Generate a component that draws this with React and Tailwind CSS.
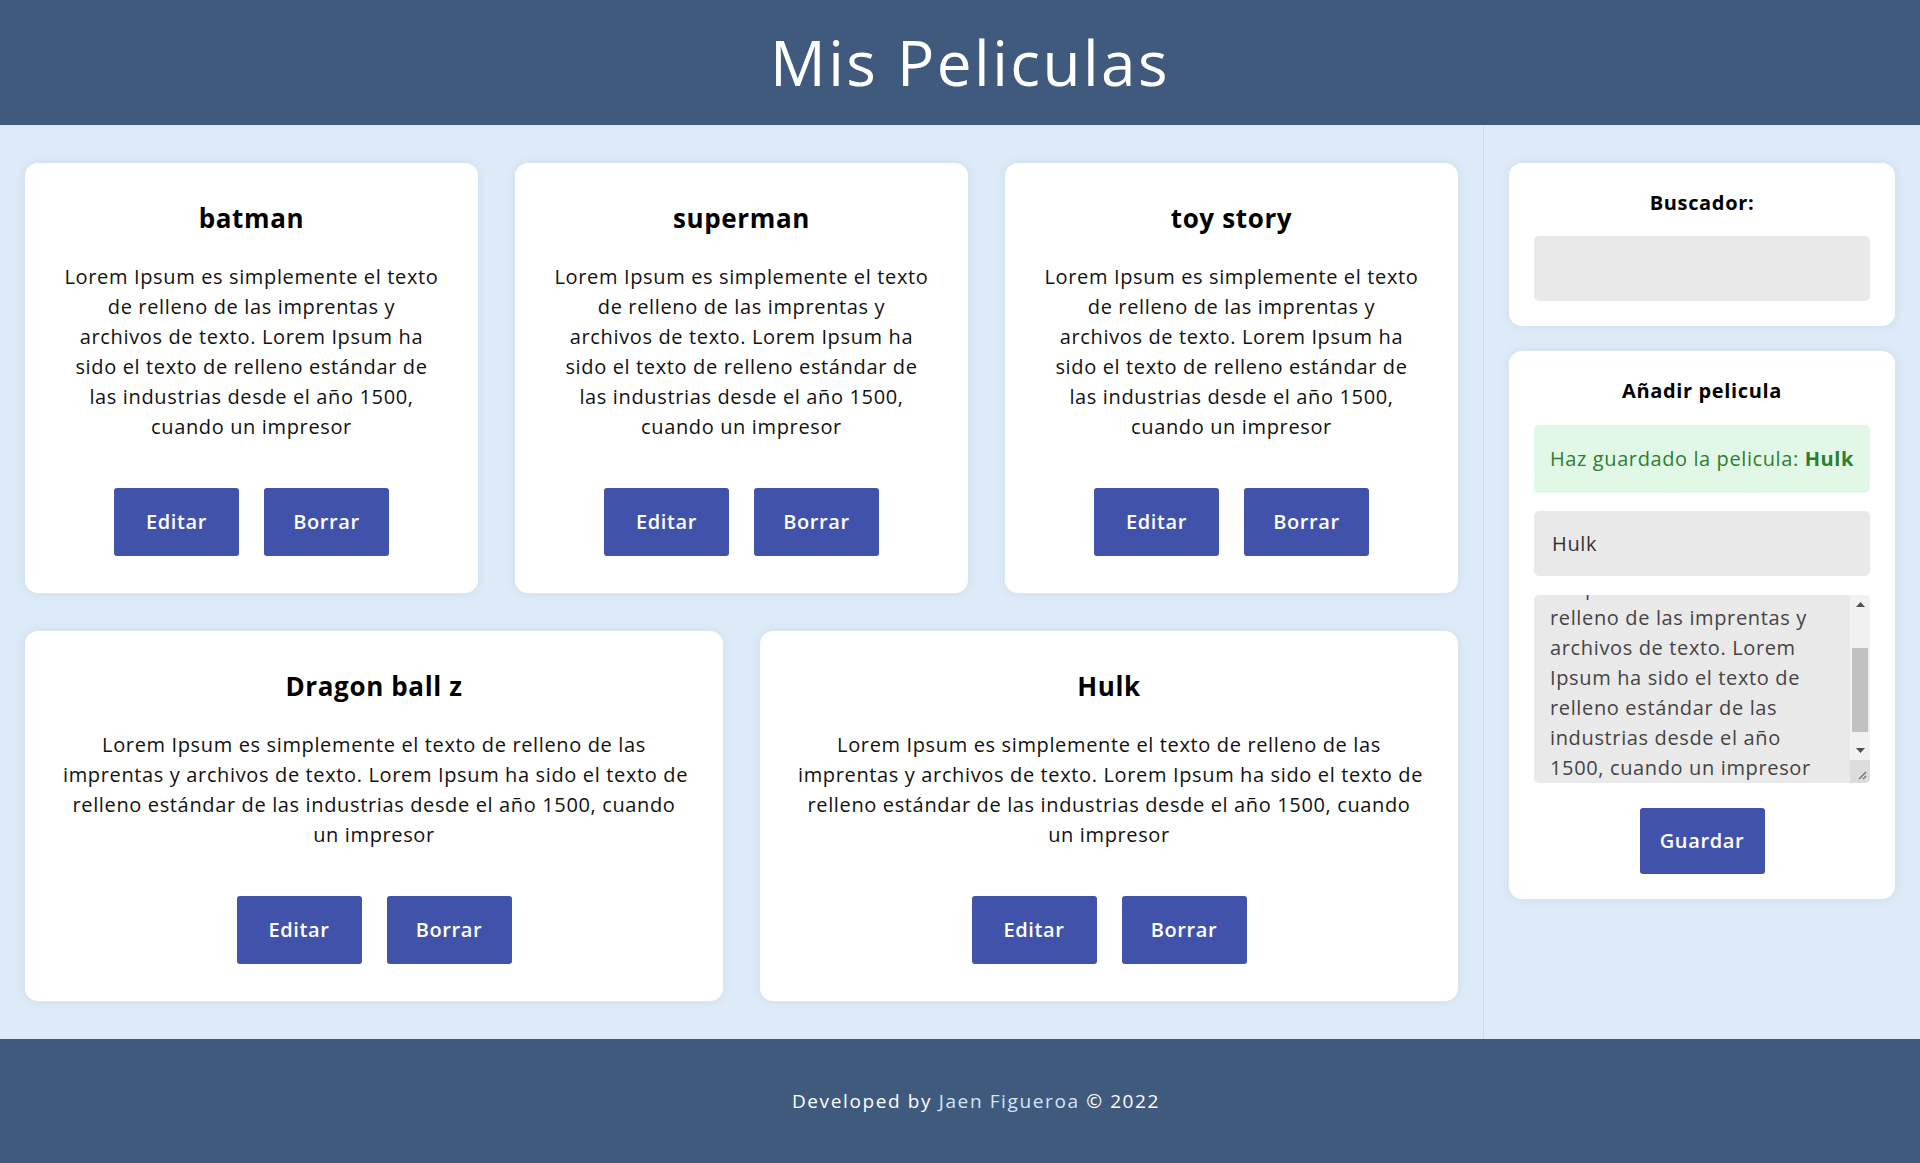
import { useEffect, useRef } from "react"

// wrapped the way the original page wraps them
const NARROW = [
  "Lorem Ipsum es simplemente el texto",
  "de relleno de las imprentas y",
  "archivos de texto. Lorem Ipsum ha",
  "sido el texto de relleno estándar de",
  "las industrias desde el año 1500,",
  "cuando un impresor",
]
const WIDE = [
  "Lorem Ipsum es simplemente el texto de relleno de las",
  "imprentas y archivos de texto. Lorem Ipsum ha sido el texto de",
  "relleno estándar de las industrias desde el año 1500, cuando",
  "un impresor",
]
const AREA = "Lorem Ipsum es\nsimplemente el texto de\nrelleno de las imprentas y\narchivos de texto. Lorem\nIpsum ha sido el texto de\nrelleno estándar de las\nindustrias desde el año\n1500, cuando un impresor"

const peliculas = [
  { id: 1, title: "batman", wide: false },
  { id: 2, title: "superman", wide: false },
  { id: 3, title: "toy story", wide: false },
  { id: 4, title: "Dragon ball z", wide: true },
  { id: 5, title: "Hulk", wide: true },
]

function Pelicula({ title, wide }) {
  const lines = wide ? WIDE : NARROW
  return (
    <article className="basis-[440px] grow min-w-0 bg-white rounded-[13px] shadow-[0_0_12px_rgba(40,70,110,0.07)] pt-[36px] pb-[37px] px-[38px] text-center">
      <h3 className="text-[26px] leading-[39px] font-bold text-black">{title}</h3>
      <p className="mt-[24px] text-[20px] leading-[30px] text-[#111]">
        {lines.map((l, i) => <span key={i} className="block whitespace-nowrap">{l}</span>)}
      </p>
      <div className="mt-[46px] flex justify-center gap-[25px]">
        <button className="w-[125px] h-[68px] rounded-[3px] bg-[#4152aa] text-white text-[20px] font-semibold">Editar</button>
        <button className="w-[125px] h-[68px] rounded-[3px] bg-[#4152aa] text-white text-[20px] font-semibold">Borrar</button>
      </div>
    </article>
  )
}

function FakeScrollbar() {
  return (
    <div className="w-[20px] shrink-0 flex flex-col bg-[#f1f1f1]">
      <div className="h-[19px] flex items-center justify-center">
        <svg width="9" height="5" viewBox="0 0 9 5"><path d="M0 5 L4.5 0 L9 5 Z" fill="#505050" /></svg>
      </div>
      <div className="flex-1 px-[2px] pt-[34px]">
        <div className="h-[84px] bg-[#c1c1c1]" />
      </div>
      <div className="h-[19px] flex items-center justify-center">
        <svg width="9" height="5" viewBox="0 0 9 5"><path d="M0 0 L4.5 5 L9 0 Z" fill="#505050" /></svg>
      </div>
      <div className="h-[23px] bg-[#dcdcdc] flex items-end justify-end p-[3px]">
        <svg width="10" height="10" viewBox="0 0 10 10">
          <path d="M9 2 L2 9 M9 6 L6 9" stroke="#6b6b6b" strokeWidth="1.2" />
        </svg>
      </div>
    </div>
  )
}

export default function App() {
  const areaRef = useRef(null)

  useEffect(() => {
    if (areaRef.current) areaRef.current.scrollTop = areaRef.current.scrollHeight
  }, [])

  return (
    <div className="min-h-screen flex flex-col bg-[#ddeaf7] font-['Open_Sans',sans-serif] tracking-[0.04em]">
      <header className="h-[125px] bg-[#405a7e] flex items-center justify-center pl-[20px]">
        <h1 className="text-white text-[62px] font-medium tracking-[0.04em]">Mis Peliculas</h1>
      </header>

      <main className="flex flex-1">
        <section className="flex-1 min-w-0 px-[25px] py-[38px]">
          <div className="flex flex-wrap gap-x-[37px] gap-y-[38px]">
            {peliculas.map(p => <Pelicula key={p.id} title={p.title} wide={p.wide} />)}
          </div>
        </section>

        <aside className="w-[437px] shrink-0 border-l border-[#cbd9e8] pl-[25px] pr-[25px] pt-[38px] flex flex-col gap-[25px]">
          <div className="bg-white rounded-[13px] shadow-[0_0_12px_rgba(40,70,110,0.07)] p-[25px]">
            <h3 className="text-center text-[20px] leading-[30px] font-bold text-black">Buscador:</h3>
            <input type="text" className="mt-[18px] w-full h-[65px] rounded-[5px] bg-[#e9e9e9] outline-none px-[16px] text-[20px]" />
          </div>

          <div className="bg-white rounded-[13px] shadow-[0_0_12px_rgba(40,70,110,0.07)] p-[25px]">
            <h3 className="text-center text-[20px] leading-[30px] font-bold text-black">Añadir pelicula</h3>
            <div className="mt-[19px] h-[68px] rounded-[5px] bg-[#e0f8e5] text-[#2e7d32] text-[20px] flex items-center justify-center tracking-[0.03em]">
              <span>Haz guardado la pelicula: <strong className="font-bold">Hulk</strong></span>
            </div>
            <input type="text" defaultValue="Hulk" className="mt-[18px] w-full h-[65px] rounded-[5px] bg-[#e9e9e9] outline-none px-[18px] text-[20px] text-[#333]" />
            <div className="mt-[19px] h-[188px] flex rounded-[5px] overflow-hidden bg-[#e9e9e9]">
              <textarea
                ref={areaRef}
                defaultValue={AREA}
                className="flex-1 min-w-0 h-full resize-none overflow-hidden bg-transparent outline-none pl-[16px] pr-[4px] pt-[2px] pb-0 text-[20px] leading-[30px] text-[#444] whitespace-pre"
              />
              <FakeScrollbar />
            </div>
            <div className="mt-[25px] flex justify-center">
              <button className="w-[125px] h-[66px] rounded-[3px] bg-[#4152aa] text-white text-[20px] font-semibold">Guardar</button>
            </div>
          </div>
        </aside>
      </main>

      <footer className="h-[124px] bg-[#405a7e] flex items-center justify-center pl-[32px] text-white text-[19px] tracking-[0.085em]">
        <p>Developed by <span className="text-[#d3e6f8]">Jaen Figueroa</span> © 2022</p>
      </footer>
    </div>
  )
}
